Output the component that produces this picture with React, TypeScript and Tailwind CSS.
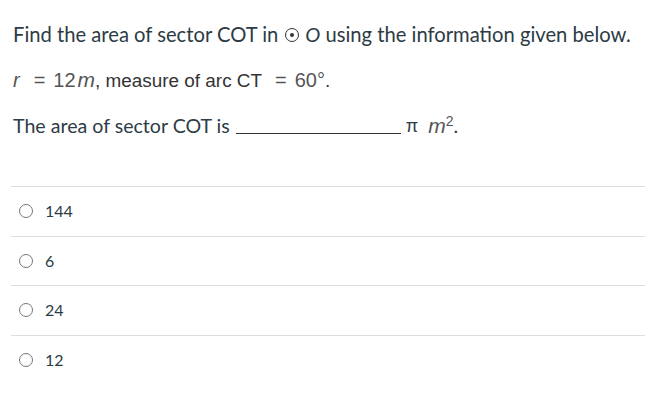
import React from 'react';

const options = ['144', '6', '24', '12'];

function Radio() {
  return (
    <span className="inline-block w-[14px] h-[14px] rounded-full border border-[#777] bg-white shrink-0" />
  );
}

export default function App() {
  return (
    <div className="w-[645px] h-[401px] bg-white text-[#2d3b45] font-['Lato',sans-serif] overflow-hidden">
      <div className="pl-[13px] pt-[21px]">
        <p className="text-[20.2px] leading-[26px] h-[26px] flex items-center whitespace-nowrap">
          <span>Find the area of sector COT in</span>
          <span className="inline-flex items-center justify-center w-[14px] h-[14px] rounded-full border-[1.5px] border-[#333] ml-[7px] mr-[6px] mt-[2px]">
            <span className="w-[4px] h-[4px] rounded-full bg-[#333]" />
          </span>
          <span className="italic">O</span>
          <span>&nbsp;using the information given below.</span>
        </p>
        <p className="text-[18.9px] leading-[26px] h-[26px] mt-[20px] flex items-baseline whitespace-nowrap font-['Liberation_Sans',sans-serif] text-[#333]">
          <span className="italic text-[#555] text-[20px]">r</span>
          <span className="text-[#555] text-[20px] ml-[14px]">=</span>
          <span className="text-[#555] text-[20px] ml-[8px]">12</span>
          <span className="italic text-[#555] text-[21px] ml-[2px]">m</span>
          <span>, measure of arc CT</span>
          <span className="text-[#555] text-[20px] ml-[13px]">=</span>
          <span className="text-[#555] text-[20px] ml-[8px]">60°</span>
          <span>.</span>
        </p>
        <p className="text-[19.6px] leading-[26px] h-[26px] mt-[20px] flex items-end whitespace-nowrap">
          <span>The area of sector COT is</span>
          <span className="inline-block w-[165px] border-b border-[#333] ml-[6px] mb-[5px]" />
          <span className="ml-[5px] font-['Liberation_Sans',sans-serif] text-[18px]">π</span>
          <span className="italic text-[#555] ml-[10px] font-['Liberation_Sans',sans-serif] text-[21px]">
            m<sup className="text-[14px] not-italic">2</sup>
          </span>
          <span>.</span>
        </p>
      </div>
      <div className="mt-[47px] ml-[11px] border-t border-[#ddd]">
        {options.map((o, i) => (
          <div
            key={o}
            className={`flex items-center gap-[12px] pl-[8px] h-[49.5px] ${i < options.length - 1 ? 'border-b border-[#ddd]' : ''}`}
          >
            <Radio />
            <span className="text-[16px]">{o}</span>
          </div>
        ))}
      </div>
    </div>
  );
}
